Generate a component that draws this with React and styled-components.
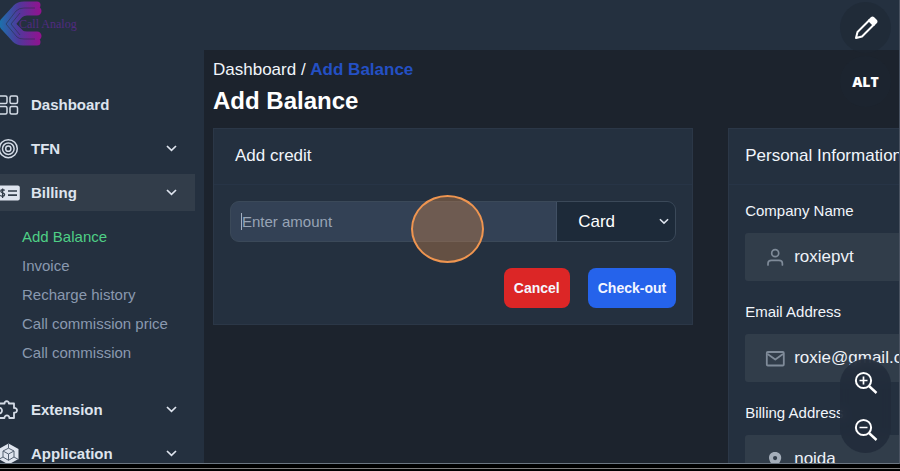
import React, { useState } from 'react'
import styled, { createGlobalStyle, css } from 'styled-components'

const GlobalStyle = createGlobalStyle`
    * {
        box-sizing: border-box;
    }

    body {
        margin: 0;
        background: #000;
        color: #f1f5fb;
        font-family: 'Liberation Sans', Arial, sans-serif;
        font-size: 17px;
        overflow: hidden;
    }

    button,
    input,
    select {
        font-family: inherit;
    }
`

const Frame = styled.div`
    display: flex;
    flex-direction: column;
    height: 100vh;
    position: relative;
`

const Screen = styled.div`
    flex: 1;
    min-height: 0;
    overflow: hidden;
    display: flex;
    background: #1c232d;
    border-right: 1px solid #4a5361;
    border-bottom: 1px solid #6c7681;
`

const Strip = styled.footer`
    flex: none;
    height: 7px;
    padding-top: 4px;
    background: #000;

    &::before {
        content: '';
        display: block;
        height: 1px;
        background: #7d7d7d;
    }
`

const Sidebar = styled.aside`
    flex: none;
    width: 204px;
    padding-right: 9px;
    background: #24303f;
`

const Brand = styled.a`
    display: block;
    height: 86px;

    svg {
        display: block;
    }
`

const Menu = styled.nav`
    display: flex;
    flex-direction: column;
    gap: 7px;
`

const MenuItem = styled.button`
    display: flex;
    align-items: center;
    width: 100%;
    height: 37px;
    padding: 0 18px 0 0;
    border: 0;
    background: ${props => (props.$active ? '#323d4a' : 'transparent')};
    color: #dee4ee;
    font-size: 15px;
    font-weight: 700;
    text-align: left;

    > svg:first-child {
        flex: none;
        margin-right: 11px;
    }

    > span {
        flex: 1;
    }
`

const SubMenu = styled.ul`
    display: flex;
    flex-direction: column;
    gap: 9px;
    margin: 0;
    padding: 16px 0 21px 22px;
    list-style: none;
    line-height: 20px;
`

const SubLink = styled.a`
    display: block;
    color: ${props => (props.$active ? '#4fcf86' : '#8a99af')};
    font-size: 15px;
    text-decoration: none;
`

const Page = styled.div`
    flex: 1;
    min-width: 0;
`

const TopBar = styled.header`
    height: 50px;
    background: #24303f;
`

const Main = styled.main`
    padding: 10px 0 0 9px;
`

const Breadcrumb = styled.nav`
    line-height: 20px;

    a {
        color: #f1f5fb;
        text-decoration: none;
    }

    strong {
        color: #2450c4;
    }
`

const Title = styled.h1`
    margin: 7px 0 13px;
    color: #fff;
    font-size: 24px;
    line-height: 28px;
`

const Columns = styled.div`
    display: grid;
    grid-template-columns: 70% 50%;
    gap: 35px;
    align-items: start;
`

const Card = styled.section`
    border: 1px solid #2b3747;
    background: #24303f;
`

const CardTitle = styled.h2`
    height: 56px;
    margin: 0;
    padding: 0 ${props => props.$inset}px;
    border-bottom: 1px solid #273446;
    font-size: 17px;
    font-weight: 400;
    line-height: 54px;
    white-space: nowrap;
`

const CardBody = styled.form`
    padding: 16px;
`

const AmountRow = styled.div`
    display: flex;
    height: 41px;
    border: 1px solid #3b4959;
    border-radius: 9px;
    overflow: hidden;
    background: #334155;
`

const AmountBox = styled.div`
    flex: 1;
    display: flex;
    align-items: center;
    padding-left: 10px;
`

const Caret = styled.span`
    width: 1px;
    height: 17px;
    background: #a3afc0;
`

const AmountInput = styled.input`
    flex: 1;
    min-width: 0;
    padding: 0;
    border: 0;
    outline: 0;
    background: transparent;
    color: #fff;
    font-size: 15px;

    &::placeholder {
        color: #98a4b5;
        opacity: 1;
    }
`

const MethodBox = styled.div`
    display: grid;
    width: 119px;
    border-left: 1px solid #415064;
    background: #1d2a39;

    > * {
        grid-area: 1 / 1;
    }

    > svg {
        place-self: center end;
        margin-right: 6px;
        pointer-events: none;
    }
`

const MethodSelect = styled.select`
    appearance: none;
    width: 100%;
    padding: 0 21px;
    border: 0;
    outline: 0;
    background: transparent;
    color: #fff;
    font-size: 17px;
`

const Actions = styled.div`
    display: flex;
    justify-content: flex-end;
    gap: 18px;
    margin-top: 26px;
`

const Button = styled.button`
    height: 40px;
    padding: 0 10px;
    border: 0;
    border-radius: 8px;
    background: ${props => (props.$danger ? '#dc2626' : '#2563eb')};
    color: #f4f6ff;
    font-size: 14px;
    font-weight: 700;
`

const Field = styled.div`
    margin-bottom: 21px;
`

const FieldLabel = styled.label`
    display: block;
    margin-bottom: 12px;
    font-size: 15px;
    line-height: 20px;
`

const FieldBox = styled.div`
    display: flex;
    align-items: center;
    gap: 9px;
    height: 48px;
    padding-left: 20px;
    border-radius: 3px;
    background: #313d4a;
    color: #7f8b99;

    svg {
        flex: none;
    }
`

const FieldInput = styled.input`
    flex: 1;
    min-width: 0;
    padding: 0;
    border: 0;
    outline: 0;
    background: transparent;
    color: #eef2f8;
    font-size: 17px;
`

const Pointer = styled.div`
    position: absolute;
    top: 195px;
    left: 411px;
    width: 73px;
    height: 68px;
    border: 2px solid #ef9550;
    border-radius: 50%;
    background: rgba(220, 140, 75, 0.35);
    pointer-events: none;
`

const floating = css`
    position: absolute;
    right: 9px;
    width: 51px;
    border-radius: 26px;
`

const RoundTool = styled.button`
    ${floating}
    top: ${props => props.$top}px;
    display: grid;
    place-items: center;
    height: 51px;
    padding: 0;
    border: 0;
    background: rgba(28, 38, 50, 0.5);
    color: #fff;
    font-family: 'Open Sans', 'Liberation Sans', sans-serif;
    font-size: 14px;
    font-weight: 800;
`

const ZoomTools = styled.div`
    ${floating}
    bottom: 18px;
    display: flex;
    flex-direction: column;
    overflow: hidden;
    background: rgba(33, 43, 58, 0.88);
    backdrop-filter: blur(4px);
`

const ZoomButton = styled.button`
    display: grid;
    place-items: center;
    height: 47px;
    padding: 0;
    border: 0;
    background: transparent;
    color: #fff;
`

const Logo = () => (
    <svg width="90" height="50" viewBox="0 0 90 50" role="img" aria-label="Call Analog">
        <defs>
            <linearGradient id="brand" gradientUnits="userSpaceOnUse" x1="0" y1="0" x2="42" y2="0">
                <stop offset="0" stopColor="#1c70ac" />
                <stop offset="0.45" stopColor="#51379b" />
                <stop offset="1" stopColor="#96108e" />
            </linearGradient>
        </defs>
        <g fill="none" stroke="url(#brand)" strokeLinejoin="round">
            <path d="M37 5H24Q19 5 16 8L4 21Q2 24 4 27L15 39Q18 42 23 42H37" strokeWidth="7" strokeLinecap="round" />
            <path d="M37 11H27Q22 11 19 14L10 24L20 34Q22 36 27 36H37" strokeWidth="9" strokeLinecap="round" />
            <path d="M19 18L14 24L19 30" strokeWidth="3" />
        </g>
        <g fill="none" stroke="#24303f" strokeOpacity="0.55">
            <path d="M35 8H24Q19 8 16 11L6 24L17 37Q19 39 24 39H35" />
            <path d="M20 13L11 24L20 35" />
        </g>
        <text x="19" y="28" fill="#512b80" fontFamily="'Liberation Serif', serif" fontSize="12">
            Call Analog
        </text>
    </svg>
)

const MenuIcon = ({ children }) => (
    <svg width="20" height="22" viewBox="0 0 20 22" fill="none" stroke="#d4dbe6" strokeWidth="1.5">
        {children}
    </svg>
)

const icons = {
    dashboard: (
        <>
            <rect x="-1.5" y="2" width="8.5" height="7.5" rx="1.5" />
            <rect x="10" y="2" width="7.5" height="7.5" rx="1.5" />
            <rect x="-1.5" y="12.5" width="8.5" height="7.5" rx="1.5" />
            <rect x="10" y="12.5" width="7.5" height="7.5" rx="1.5" />
        </>
    ),
    tfn: (
        <>
            <circle cx="8.3" cy="10.7" r="9" />
            <circle cx="8.3" cy="10.7" r="5.8" />
            <circle cx="8.3" cy="10.7" r="2.6" />
        </>
    ),
    billing: (
        <>
            <rect x="-3" y="3.5" width="22.8" height="15" rx="2" fill="#dee4ee" stroke="none" />
            <path d="M4.6 8.5C3.5 7.3 0.7 7.5 0.8 9.2C1 11 4.6 10.6 4.6 12.6C4.5 14.6 1.5 14.7 0.2 13.4M2.6 6.5V16" stroke="#323d4a" strokeWidth="1.3" />
            <path d="M8 9H17M8 13.2H17" stroke="#323d4a" strokeWidth="1.7" />
        </>
    ),
    extension: (
        <path
            d="M-2 4.5H4.6C4 1.5 9.4 1.5 8.8 4.5H14V9C18 8.4 18 14.2 14 13.6V19H9.3C9.6 15.6 4.2 15.6 4.5 19H-2M-1 8.8C3 8.6 3 14.6 -1 14.4"
            strokeLinejoin="round"
            strokeWidth="1.8"
        />
    ),
    application: (
        <>
            <path d="M8.5 0.5L18.5 6V16L8.5 21.5L-1.5 16V6Z" fill="#dee4ee" stroke="none" />
            <path d="M8.5 5.2L14 8V14L8.5 17.3L3 14V8ZM3 8L8.5 11L14 8M8.5 11V17.3M8.5 0.5V5.2M14 14L18.5 16.5M3 14L-1.5 16.5" stroke="#536071" strokeWidth="1" />
        </>
    ),
}

const Chevron = ({ width = 11 }) => (
    <svg width={width} height="7" viewBox="0 0 11 7" fill="none" stroke="#dee4ee" strokeWidth="1.7">
        <path d="M1 1L5.5 5.3L10 1" />
    </svg>
)

const fieldIcons = {
    user: (
        <g fill="none" stroke="currentColor" strokeWidth="1.7" strokeLinecap="round">
            <circle cx="10.2" cy="6.2" r="3.5" />
            <path d="M3 18V16.7Q3 13.4 6.5 13.4H14Q17.4 13.4 17.4 16.7V18" />
        </g>
    ),
    mail: (
        <g fill="none" stroke="currentColor" strokeWidth="1.8" strokeLinejoin="round">
            <rect x="1.8" y="4" width="17" height="13.5" rx="1" />
            <path d="M2.5 6L10.3 11.5L18 6" />
        </g>
    ),
    pin: (
        <path
            fill="#a4aeba"
            fillRule="evenodd"
            d="M10 3C6 3 4 5.5 4 8.8C4 12.5 8 17 10 19C12 17 16.2 12.5 16.2 8.8C16.2 5.5 14 3 10 3ZM10.1 7A2.1 2.1 0 1 0 10.1 11.2A2.1 2.1 0 0 0 10.1 7Z"
        />
    ),
}

const Magnifier = ({ plus }) => (
    <svg width="24" height="24" viewBox="0 0 24 24" fill="none" stroke="currentColor" strokeWidth="2">
        <circle cx="9.5" cy="9.5" r="7.6" />
        <path d="M15 15L22.5 22" strokeWidth="2.4" />
        <path d={plus ? 'M5.5 9.5H13.5M9.5 5.5V13.5' : 'M5.5 9.5H13.5'} strokeWidth="1.7" />
    </svg>
)

const billingLinks = ['Add Balance', 'Invoice', 'Recharge history', 'Call commission price', 'Call commission']

const profile = [
    { id: 'company', label: 'Company Name', value: 'roxiepvt', icon: 'user' },
    { id: 'email', label: 'Email Address', value: 'roxie@gmail.com', icon: 'mail' },
    { id: 'address', label: 'Billing Address', value: 'noida', icon: 'pin' },
]

const NavButton = ({ icon, label, active, plain }) => (
    <MenuItem type="button" $active={active}>
        <MenuIcon>{icons[icon]}</MenuIcon>
        <span>{label}</span>
        {!plain && <Chevron />}
    </MenuItem>
)

function App() {
    const [amount, setAmount] = useState('')

    return (
        <Frame>
            <GlobalStyle />
            <Screen>
                <Sidebar>
                    <Brand href="#home">
                        <Logo />
                    </Brand>
                    <Menu>
                        <NavButton icon="dashboard" label="Dashboard" plain />
                        <NavButton icon="tfn" label="TFN" />
                        <div>
                            <NavButton icon="billing" label="Billing" active />
                            <SubMenu>
                                {billingLinks.map((link, i) => (
                                    <li key={link}>
                                        <SubLink href="#billing" $active={i === 0}>
                                            {link}
                                        </SubLink>
                                    </li>
                                ))}
                            </SubMenu>
                        </div>
                        <NavButton icon="extension" label="Extension" />
                        <NavButton icon="application" label="Application" />
                    </Menu>
                </Sidebar>

                <Page>
                    <TopBar />
                    <Main>
                        <Breadcrumb>
                            <a href="#dashboard">Dashboard</a> / <strong>Add Balance</strong>
                        </Breadcrumb>
                        <Title>Add Balance</Title>

                        <Columns>
                            <Card>
                                <CardTitle $inset={21}>Add credit</CardTitle>
                                <CardBody>
                                    <AmountRow>
                                        <AmountBox>
                                            {!amount && <Caret />}
                                            <AmountInput
                                                type="text"
                                                aria-label="Amount"
                                                placeholder="Enter amount"
                                                value={amount}
                                                onChange={event => setAmount(event.target.value)}
                                            />
                                        </AmountBox>
                                        <MethodBox>
                                            <MethodSelect aria-label="Payment method">
                                                <option>Card</option>
                                            </MethodSelect>
                                            <Chevron width={10} />
                                        </MethodBox>
                                    </AmountRow>
                                    <Actions>
                                        <Button type="button" $danger>
                                            Cancel
                                        </Button>
                                        <Button type="button">Check-out</Button>
                                    </Actions>
                                </CardBody>
                            </Card>

                            <Card>
                                <CardTitle $inset={16}>Personal Information</CardTitle>
                                <CardBody>
                                    {profile.map(({ id, label, value, icon }) => (
                                        <Field key={id}>
                                            <FieldLabel htmlFor={id}>{label}</FieldLabel>
                                            <FieldBox>
                                                <svg width="20" height="20" viewBox="0 0 20 20">
                                                    {fieldIcons[icon]}
                                                </svg>
                                                <FieldInput id={id} type="text" defaultValue={value} />
                                            </FieldBox>
                                        </Field>
                                    ))}
                                </CardBody>
                            </Card>
                        </Columns>
                    </Main>
                </Page>
            </Screen>
            <Strip />

            <Pointer />
            <RoundTool type="button" aria-label="Edit" $top={2}>
                <svg width="24" height="24" viewBox="0 0 24 24" fill="none" stroke="#fff" strokeWidth="2" strokeLinejoin="round">
                    <path d="M2 22L3.5 16L15.5 4L20 8.5L8 20.5Z" />
                    <path d="M15 4.5L17.5 2Q18.5 1 19.5 2L22 4.5Q23 5.5 22 6.5L19.5 9Z" fill="#fff" />
                </svg>
            </RoundTool>
            <RoundTool type="button" $top={56}>
                ALT
            </RoundTool>
            <ZoomTools>
                <ZoomButton type="button" aria-label="Zoom in">
                    <Magnifier plus />
                </ZoomButton>
                <ZoomButton type="button" aria-label="Zoom out">
                    <Magnifier />
                </ZoomButton>
            </ZoomTools>
        </Frame>
    )
}

export default App
